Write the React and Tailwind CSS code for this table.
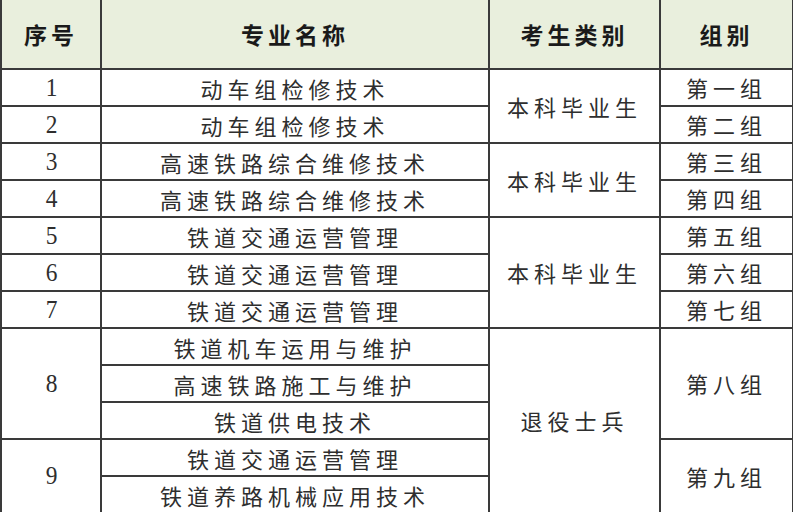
const rows = [
  { no: '1', major: '动车组检修技术', group: '第一组', type: '本科毕业生', typeSpan: 2 },
  { no: '2', major: '动车组检修技术', group: '第二组' },
  { no: '3', major: '高速铁路综合维修技术', group: '第三组', type: '本科毕业生', typeSpan: 2 },
  { no: '4', major: '高速铁路综合维修技术', group: '第四组' },
  { no: '5', major: '铁道交通运营管理', group: '第五组', type: '本科毕业生', typeSpan: 3 },
  { no: '6', major: '铁道交通运营管理', group: '第六组' },
  { no: '7', major: '铁道交通运营管理', group: '第七组' },
  { no: '8', noSpan: 3, major: '铁道机车运用与维护', group: '第八组', groupSpan: 3, type: '退役士兵', typeSpan: 5 },
  { major: '高速铁路施工与维护', skipNo: true, skipGroup: true },
  { major: '铁道供电技术', skipNo: true, skipGroup: true },
  { no: '9', noSpan: 2, major: '铁道交通运营管理', group: '第九组', groupSpan: 2 },
  { major: '铁道养路机械应用技术', skipNo: true, skipGroup: true },
];

const cell = 'border-2 border-[#3a3a3a] text-center align-middle p-0';
const cjk = 'text-[22px] tracking-[5px] text-[#2e2e2e]';

export default function App() {
  return (
    <div className="w-[793px] h-[512px] overflow-hidden bg-white font-['Noto_Sans_CJK_SC',sans-serif]">
      <table className="table-fixed border-collapse w-[792px]">
        <colgroup>
          <col className="w-[100px]" />
          <col className="w-[388px]" />
          <col className="w-[171px]" />
          <col className="w-[133px]" />
        </colgroup>
        <thead>
          <tr className="h-[69px] bg-[#e9efdd]">
            {['序号', '专业名称', '考生类别', '组别'].map((h) => (
              <th
                key={h}
                className={`${cell} border-t-0 text-[23px] font-bold tracking-[4px] text-[#1a1a1a]`}
              >
                {h}
              </th>
            ))}
          </tr>
        </thead>
        <tbody>
          {rows.map((r, i) => (
            <tr key={i} className="h-[37px]">
              {!r.skipNo && (
                <td
                  rowSpan={r.noSpan || 1}
                  className={`${cell} font-['Liberation_Serif',serif] text-[26px] leading-none text-[#2e2e2e]`}
                >
                  <span className="inline-block scale-x-90">{r.no}</span>
                </td>
              )}
              <td className={`${cell} ${cjk} leading-none`}>{r.major}</td>
              {r.type && (
                <td rowSpan={r.typeSpan} className={`${cell} ${cjk}`}>
                  {r.type}
                </td>
              )}
              {!r.skipGroup && (
                <td rowSpan={r.groupSpan || 1} className={`${cell} ${cjk}`}>
                  {r.group}
                </td>
              )}
            </tr>
          ))}
        </tbody>
      </table>
    </div>
  );
}
